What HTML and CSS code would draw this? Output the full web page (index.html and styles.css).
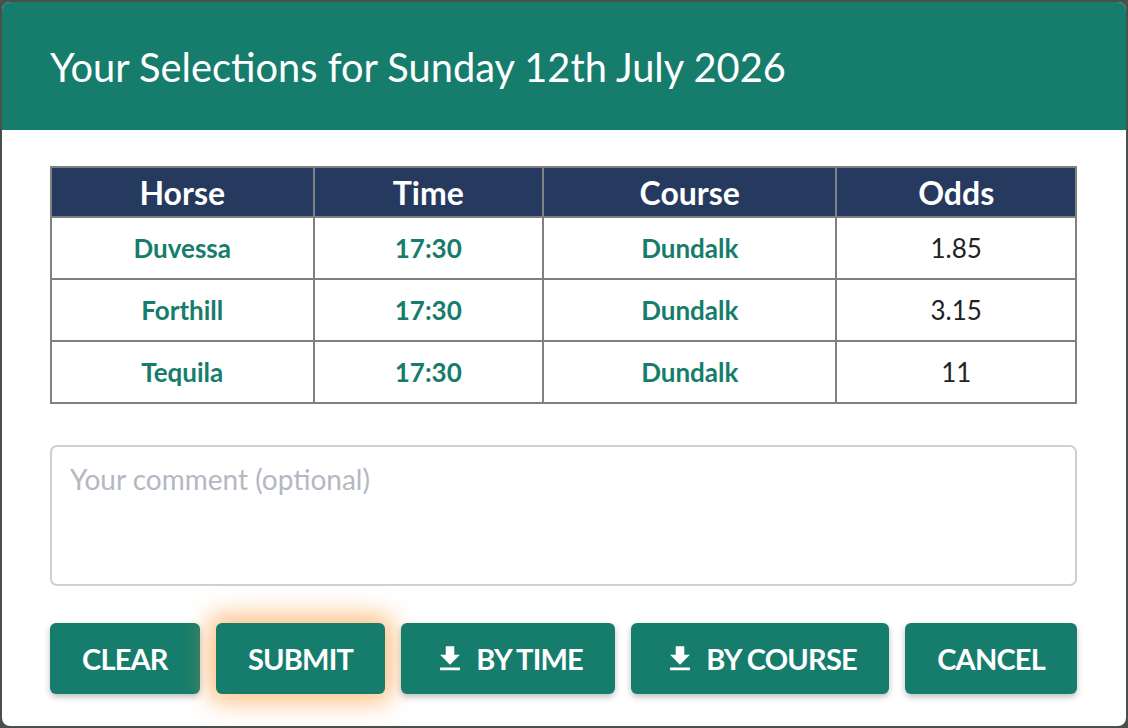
FILE: index.html
```html
<!DOCTYPE html>
<html lang="en">
<head>
    <meta charset="UTF-8">
    <meta name="viewport" content="width=device-width, initial-scale=1.0">
    <title>Your Selections</title>
    <link rel="stylesheet" href="styles.css">
</head>
<body>
    <div class="dialog">
        <div class="dialog-header">
            <h2>Your Selections for Sunday 12th July 2026</h2>
        </div>
        <div class="dialog-body">
            <table class="selections">
                <thead>
                    <tr>
                        <th class="col-horse">Horse</th>
                        <th class="col-time">Time</th>
                        <th class="col-course">Course</th>
                        <th class="col-odds">Odds</th>
                    </tr>
                </thead>
                <tbody>
                    <tr>
                        <td class="green">Duvessa</td>
                        <td class="green">17:30</td>
                        <td class="green">Dundalk</td>
                        <td>1.85</td>
                    </tr>
                    <tr>
                        <td class="green">Forthill</td>
                        <td class="green">17:30</td>
                        <td class="green">Dundalk</td>
                        <td>3.15</td>
                    </tr>
                    <tr>
                        <td class="green">Tequila</td>
                        <td class="green">17:30</td>
                        <td class="green">Dundalk</td>
                        <td>11</td>
                    </tr>
                </tbody>
            </table>

            <textarea class="comment" placeholder="Your comment (optional)"></textarea>

            <div class="actions">
                <button class="btn">Clear</button>
                <button class="btn btn-glow">Submit</button>
                <button class="btn">
                    <svg viewBox="0 0 24 24"><path d="M19 9h-4V3H9v6H5l7 7 7-7zM5 18v2h14v-2H5z"/></svg>
                    By Time
                </button>
                <button class="btn">
                    <svg viewBox="0 0 24 24"><path d="M19 9h-4V3H9v6H5l7 7 7-7zM5 18v2h14v-2H5z"/></svg>
                    By Course
                </button>
                <button class="btn">Cancel</button>
            </div>
        </div>
    </div>
</body>
</html>
```

FILE: styles.css
```css
* {
    box-sizing: border-box;
    margin: 0;
    padding: 0;
    font-family: Lato, 'Open Sans', sans-serif;
}

body {
    width: 1128px;
    height: 728px;
    padding: 2px;
    background: #4a4f4c;
    overflow: hidden;
}

.dialog {
    height: 724px;
    background: #fff;
    border-radius: 8px;
    overflow: hidden;
}

.dialog-header {
    height: 128px;
    display: flex;
    align-items: center;
    padding: 0 48px;
    background: #167d6c;
}

.dialog-header h2 {
    color: #fff;
    font-size: 39.8px;
    font-weight: 400;
}

.dialog-body {
    padding: 36px 48px 0;
}

/* table */
.selections {
    width: 1027px;
    border-collapse: collapse;
    border: 2px solid #808080;
}

.selections th,
.selections td {
    border: 2px solid #808080;
    text-align: center;
}

.selections th {
    height: 50px;
    background: #253a5e;
    color: #fff;
    font-size: 32px;
    font-weight: 700;
}

.selections td {
    height: 62px;
    font-size: 26px;
    color: #222;
}

.selections td.green {
    color: #167d6c;
    font-weight: 700;
}

.col-horse { width: 263px; }
.col-time { width: 230px; }
.col-course { width: 294px; }
.col-odds { width: 240px; }

/* comment */
.comment {
    display: block;
    width: 1027px;
    height: 141px;
    margin-top: 41px;
    padding: 15px 18px;
    border: 2px solid #cfcfcf;
    border-radius: 7px;
    font-size: 28px;
    resize: none;
    outline: none;
}

.comment::placeholder {
    color: #b3b8c2;
}

/* buttons */
.actions {
    width: 1027px;
    display: flex;
    justify-content: space-between;
    margin-top: 37px;
}

.btn {
    height: 71px;
    display: flex;
    align-items: center;
    gap: 9px;
    padding: 0 32px;
    border: none;
    border-radius: 6px;
    background: #167d6c;
    color: #fff;
    font-size: 29px;
    font-weight: 700;
    text-transform: uppercase;
    letter-spacing: -0.8px;
    box-shadow: 0 3px 6px rgba(0, 0, 0, 0.25);
    cursor: pointer;
}

.btn svg {
    width: 34px;
    height: 34px;
    fill: #fff;
}

.btn-glow {
    box-shadow: 0 0 24px 8px rgba(255, 150, 50, 0.6);
}
```
